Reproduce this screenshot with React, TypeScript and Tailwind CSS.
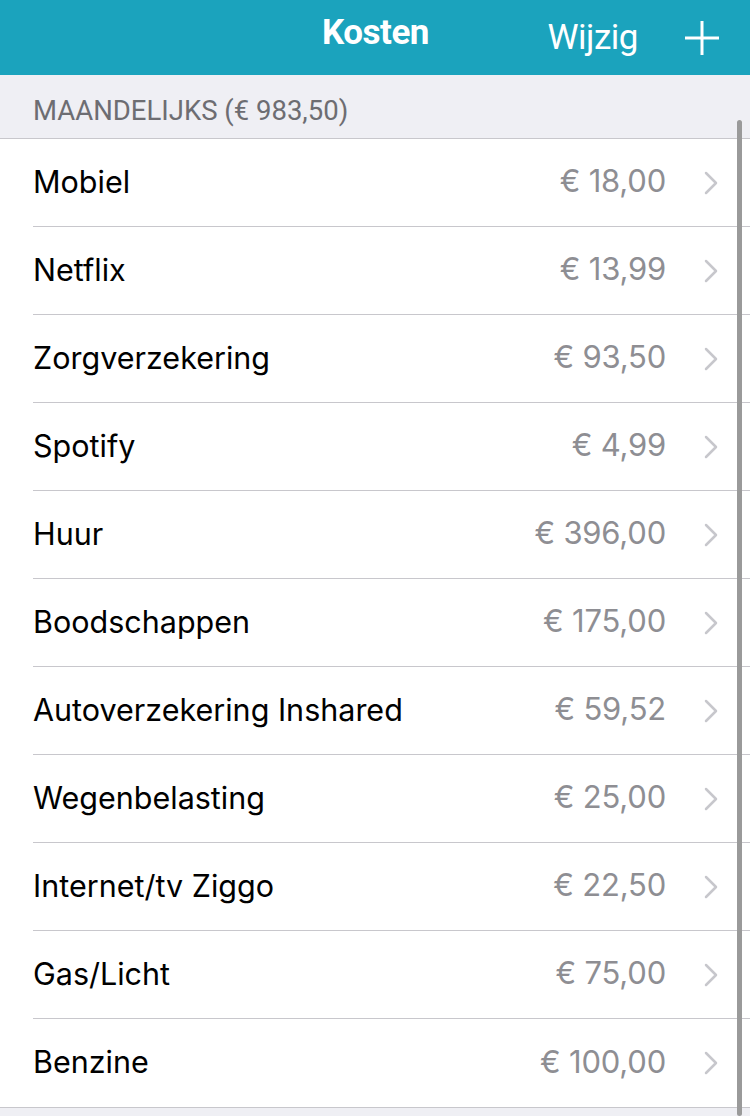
import React from "react";

const items: [string, string][] = [
  ["Mobiel", "€ 18,00"],
  ["Netflix", "€ 13,99"],
  ["Zorgverzekering", "€ 93,50"],
  ["Spotify", "€ 4,99"],
  ["Huur", "€ 396,00"],
  ["Boodschappen", "€ 175,00"],
  ["Autoverzekering Inshared", "€ 59,52"],
  ["Wegenbelasting", "€ 25,00"],
  ["Internet/tv Ziggo", "€ 22,50"],
  ["Gas/Licht", "€ 75,00"],
  ["Benzine", "€ 100,00"],
];

function Chevron() {
  return (
    <svg width="14" height="24" viewBox="0 0 14 24" fill="none">
      <path d="M2 2 L12 12 L2 22" stroke="#c7c7cc" strokeWidth="2.5" strokeLinecap="round" strokeLinejoin="round" />
    </svg>
  );
}

export default function App() {
  return (
    <div className="relative w-[750px] h-[1116px] overflow-hidden bg-[#efeff4]" style={{ fontFamily: "Roboto, 'Noto Sans', sans-serif" }}>
      <div className="h-[75px] bg-[#1ba3bd] flex items-center text-white relative">
        <div className="absolute left-0 right-0 top-0 h-[64px] flex items-center justify-center">
          <span className="text-[35px] font-bold tracking-[-0.5px] pl-[1px] pt-[2px]">Kosten</span>
        </div>
        <div className="ml-auto h-[64px] flex items-center pr-[30px]">
          <span className="text-[35px] tracking-[-0.5px] pt-[2px]">Wijzig</span>
          <svg className="ml-[46px]" width="36" height="36" viewBox="0 0 36 36">
            <path d="M18 1 V35 M1 18 H35" stroke="white" strokeWidth="3" />
          </svg>
        </div>
      </div>
      <div className="h-[64px] flex items-center pl-[33px] pt-[9px] border-b border-[#c8c7cc]">
        <span className="text-[27.5px] text-[#6d6d72]">MAANDELIJKS (€ 983,50)</span>
      </div>
      <div className="bg-white border-b border-[#c8c7cc]">
        {items.map(([name, price], i) => (
          <div key={name} className="pl-[33px]">
            <div className={`h-[88px] flex items-center pr-[32px] ${i < items.length - 1 ? "border-b border-[#c8c7cc]" : ""}`}>
              <span className="text-[30.5px] text-black flex-1 pb-[2px]" style={{ fontFamily: "Inter, Roboto, sans-serif" }}>{name}</span>
              <span className="text-[31px] text-[#8e8e93] mr-[38px] pb-[2px]" style={{ fontFamily: "Inter, Roboto, sans-serif", letterSpacing: "-0.2px" }}>{price}</span>
              <Chevron />
            </div>
          </div>
        ))}
      </div>
      <div className="absolute right-[8px] top-[120px] bottom-0 w-[5px] rounded-full bg-[#9a9a9a]" />
    </div>
  );
}
